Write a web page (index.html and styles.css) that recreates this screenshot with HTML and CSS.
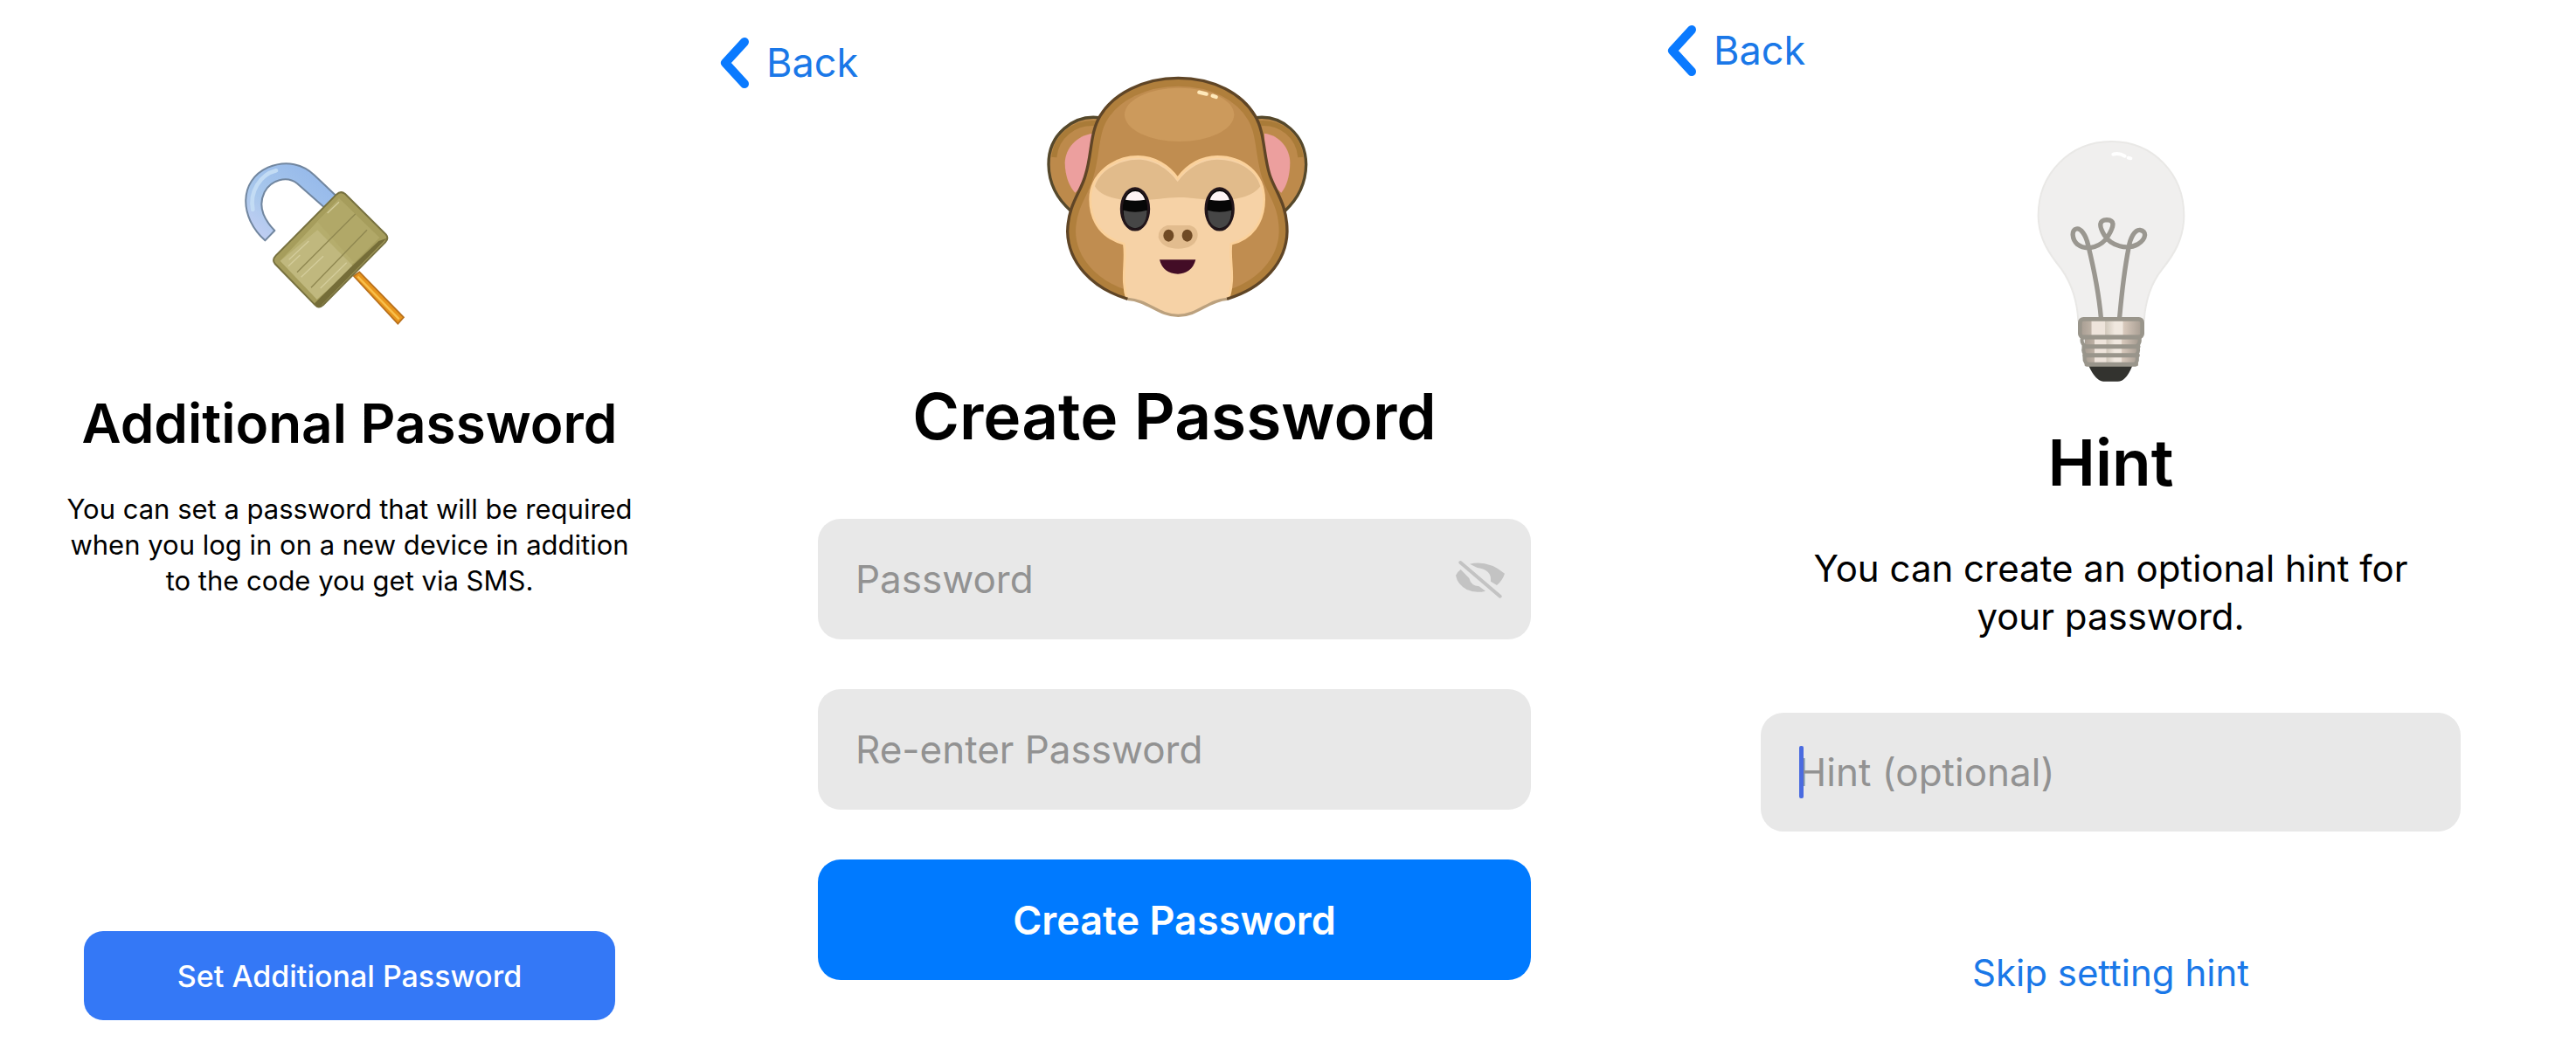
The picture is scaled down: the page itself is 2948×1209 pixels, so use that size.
FILE: index.html
```html
<!DOCTYPE html>
<html lang="en">
<head>
    <meta charset="UTF-8">
    <meta name="viewport" content="width=device-width, initial-scale=1.0">
    <title>Additional Password</title>
    <link rel="stylesheet" href="styles.css">
</head>
<body>
    <main class="screens">
        <!-- Step 1: intro -->
        <section class="screen intro">
            <svg class="art lock" viewBox="0 0 840 660" aria-hidden="true">
                <defs>
                    <linearGradient id="shackle" x1="0" y1="1" x2="1" y2="0">
                        <stop offset="0" stop-color="#c9d0f5"/>
                        <stop offset=".35" stop-color="#a9c8ec"/>
                        <stop offset="1" stop-color="#8fb4ea"/>
                    </linearGradient>
                </defs>
                <path d="M434 438L454 424L606 580L586 602Z" fill="#e8951c" stroke="#b8701c" stroke-width="5"/>
                <path d="M448 440L590 586" stroke="#f8c04c" stroke-width="7"/>
                <path d="M130 316C40 235 40 110 140 65C205 38 262 55 300 92L382 170L342 210L240 120C205 92 150 108 128 150C106 195 122 240 163 282Z" fill="url(#shackle)" stroke="#71869f" stroke-width="6" stroke-linejoin="round"/>
                <path d="M88 210C76 150 112 90 168 76" fill="none" stroke="#c3dcf4" stroke-width="14" stroke-linecap="round"/>
                <path d="M375 158Q390 144 405 156L545 295Q556 308 543 322L330 537Q314 552 300 536L164 396Q153 382 167 368Z" fill="#a69d5c" stroke="#77713f" stroke-width="6"/>
                <path d="M384 172L522 306L308 518L182 386Z" fill="#b5ad6d"/>
                <path d="M310 280L436 408L308 518L182 386Z" fill="#c0b87e"/>
                <path d="M384 172L310 252L436 392L522 306Z" fill="#b1a868"/>
                <path d="M548 308L318 544Q306 546 300 532L322 510L424 408L520 318Z" fill="#756d38"/>
                <path d="M240 425L440 225M288 478L480 280" stroke="#8f8750" stroke-width="4"/>
                <path d="M212 382L280 318M254 442L330 370M320 480L410 392M210 404L250 366M344 222L384 184" stroke="#d4cd9c" stroke-width="4"/>
            </svg>
            <h1 class="title">Additional Password</h1>
            <p class="text">You can set a password that will be required when you log in on a new device in addition to the code you get via SMS.</p>
            <button type="button" class="btn">Set Additional Password</button>
        </section>

        <!-- Step 2: password form -->
        <section class="screen create">
            <div class="hero">
                <a class="back" href="#">
                    <svg class="chevron" viewBox="0 0 33 58" aria-hidden="true"><path d="M28 5L6 29L28 53"/></svg>
                    Back
                </a>
                <svg class="art monkey" viewBox="-30 0 1050 930" aria-hidden="true">
                    <defs>
                        <clipPath id="head"><path d="M508 58C630 58 728 112 772 188C806 245 800 320 822 390C842 450 882 490 882 585C880 690 800 780 675 817C610 822 575 874 508 874C440 874 405 822 335 817C210 780 130 690 128 585C130 490 175 450 190 390C212 320 205 245 240 188C285 112 390 58 508 58Z"/></clipPath>
                    </defs>
                    <g fill="#bd8a4b" stroke="#55482b" stroke-width="10">
                        <path d="M236 194C150 184 62 250 63 355C64 430 100 480 140 515L215 420Z"/>
                        <path d="M776 194C862 184 946 250 947 355C946 430 912 480 874 515L800 420Z"/>
                    </g>
                    <path d="M82 330C88 260 150 205 232 214M928 330C922 260 862 205 784 214" fill="none" stroke="#a97b38" stroke-width="18"/>
                    <path d="M216 248C160 255 120 298 119 350C120 395 134 430 154 452L210 400Z" fill="#ec9f9e"/>
                    <path d="M804 248C856 255 892 298 892 350C891 395 880 430 862 452L806 400Z" fill="#ec9f9e"/>
                    <path d="M508 58C630 58 728 112 772 188C806 245 800 320 822 390C842 450 882 490 882 585C880 690 800 780 675 817C610 822 575 874 508 874C440 874 405 822 335 817C210 780 130 690 128 585C130 490 175 450 190 390C212 320 205 245 240 188C285 112 390 58 508 58Z" fill="#c08d50"/>
                    <g clip-path="url(#head)">
                        <path d="M508 58C630 58 728 112 772 188C806 245 800 320 822 390C842 450 882 490 882 585C880 690 800 780 675 817H335C210 780 130 690 128 585C130 490 175 450 190 390C212 320 205 245 240 188C285 112 390 58 508 58Z" fill="none" stroke="#b07f3c" stroke-width="56"/>
                        <ellipse cx="512" cy="184" rx="188" ry="92" fill="#cc9a5c"/>
                        <path d="M506 402C540 355 590 328 642 328C730 328 803 385 803 475C803 555 760 610 690 628C682 690 708 745 676 830L640 900H370L335 830C308 745 332 690 322 628C250 608 206 555 206 475C206 385 290 328 370 328C425 328 475 358 506 402Z" fill="#f6d2a6" stroke="#fbd19a" stroke-width="8"/>
                        <path d="M506 414C540 367 590 338 642 338C710 338 775 372 790 430C765 468 690 480 640 478C590 476 560 468 510 468C460 468 420 480 350 478C290 476 240 462 222 430C240 372 310 338 370 338C425 338 475 370 506 414Z" fill="#e1bb8b"/>
                    </g>
                    <path d="M335 817C210 780 130 690 128 585C130 490 175 450 190 390C212 320 205 245 240 188C285 112 390 58 508 58C630 58 728 112 772 188C806 245 800 320 822 390C842 450 882 490 882 585C880 690 800 780 675 817" fill="none" stroke="#5f4526" stroke-width="10"/>
                    <path d="M335 817C405 822 440 874 508 874C575 874 610 822 675 817" fill="none" stroke="#bba17e" stroke-width="10"/>
                    <path d="M580 107L605 113M626 119L638 123" stroke="#ffe9ba" stroke-width="13" stroke-linecap="round"/>
                    <g stroke="#22151a" stroke-width="9">
                        <ellipse cx="360" cy="508" rx="47" ry="71" fill="#070707"/>
                        <ellipse cx="650" cy="508" rx="47" ry="71" fill="#070707"/>
                    </g>
                    <path d="M320 512Q360 524 401 512Q399 570 360 574Q322 570 320 512ZM609 512Q650 524 691 512Q689 570 650 574Q611 570 609 512Z" fill="#464646"/>
                    <path d="M327 476C338 438 382 436 394 476Q360 482 327 476ZM617 476C628 438 672 436 684 476Q650 482 617 476Z" fill="#fff4f4"/>
                    <path d="M470 564H548Q580 574 574 606Q562 644 508 644Q454 644 440 606Q438 574 470 564Z" fill="#e2bc8e"/>
                    <ellipse cx="475" cy="599" rx="18" ry="21" fill="#704a24"/>
                    <ellipse cx="539" cy="599" rx="18" ry="21" fill="#704a24"/>
                    <path d="M444 682H568C560 715 535 731 507 731C475 731 452 715 444 682Z" fill="#430d26"/>
                </svg>
            </div>
            <h2 class="title title-lg">Create Password</h2>
            <form class="form">
                <div class="field">
                    <input type="password" placeholder="Password" aria-label="Password">
                    <button type="button" class="toggle" aria-label="Show password">
                        <svg viewBox="0 0 168 130" aria-hidden="true">
                            <path d="M48 13Q110 -1 168 46Q160 70 141 86L120 73Q124 32 74 26ZM17 32Q8 38 0 52Q5 82 38 101Q68 115 102 106L80 90Q52 88 46 62Z"/>
                            <path class="slash" d="M16 8L152 124"/>
                        </svg>
                    </button>
                </div>
                <div class="field">
                    <input type="password" placeholder="Re-enter Password" aria-label="Re-enter Password">
                </div>
                <button type="submit" class="btn btn-lg">Create Password</button>
            </form>
        </section>

        <!-- Step 3: hint -->
        <section class="screen hint">
            <div class="hero">
                <a class="back" href="#">
                    <svg class="chevron" viewBox="0 0 33 58" aria-hidden="true"><path d="M28 5L6 29L28 53"/></svg>
                    Back
                </a>
                <svg class="art bulb" viewBox="0 0 630 930" aria-hidden="true">
                    <defs>
                        <linearGradient id="metal">
                            <stop offset="0" stop-color="#a69c91"/>
                            <stop offset=".18" stop-color="#bdb1a5"/>
                            <stop offset=".19" stop-color="#eee4db"/>
                            <stop offset=".4" stop-color="#eee4db"/>
                            <stop offset=".41" stop-color="#d2c9bc"/>
                            <stop offset=".56" stop-color="#f0e8df"/>
                            <stop offset=".68" stop-color="#f0e8df"/>
                            <stop offset=".7" stop-color="#d8c9bc"/>
                            <stop offset="1" stop-color="#a69c91"/>
                        </linearGradient>
                    </defs>
                    <path d="M316 66C460 66 565 178 565 320C565 400 530 455 490 505C450 555 433 610 428 680H202C198 610 180 555 145 505C105 455 65 400 65 320C65 178 172 66 316 66Z" fill="#f0efee" stroke="#e9e8e6" stroke-width="6"/>
                    <path d="M322 110Q342 104 362 116M374 122L382 124" fill="none" stroke="#fff" stroke-width="12" stroke-linecap="round"/>
                    <!-- filament -->
                    <path d="M280 670C272 580 255 500 236 422C228 385 210 363 196 366C178 370 180 402 199 419C235 446 285 424 305 390C324 358 330 336 300 335C270 336 275 360 292 388C315 425 370 440 408 418C436 400 438 374 414 370C396 368 380 398 375 432C360 510 352 580 344 670" fill="none" stroke="#9a9790" stroke-width="16"/>
                    <path d="M238 836H388Q366 890 338 890H288Q260 886 238 836Z" fill="#33332f"/>
                    <rect x="224" y="738" width="184" height="98" fill="url(#metal)"/>
                    <rect x="208" y="676" width="214" height="62" rx="12" fill="url(#metal)" stroke="#99958b" stroke-width="14"/>
                    <path d="M216 738H412M222 770H408M224 800H406M232 832H398" stroke="#99958b" stroke-width="15" stroke-linecap="round"/>
                    <path d="M217 738Q210 755 224 768Q214 784 226 798Q218 818 234 832M411 738Q418 755 404 768Q414 784 402 798Q410 818 396 832" fill="none" stroke="#99958b" stroke-width="12"/>
                </svg>
            </div>
            <h2 class="title title-lg">Hint</h2>
            <p class="text text-lg">You can create an optional hint for your password.</p>
            <form class="form">
                <div class="field">
                    <input type="text" placeholder="Hint (optional)" aria-label="Hint (optional)">
                    <span class="caret"></span>
                </div>
                <a class="skip" href="#">Skip setting hint</a>
            </form>
        </section>
    </main>
</body>
</html>
```
FILE: styles.css
```css
* {
    margin: 0;
    padding: 0;
    box-sizing: border-box;
}
body {
    background: #fff;
    color: #000;
    font-family: Inter, "Liberation Sans", sans-serif;
}
.screens {
    display: grid;
    grid-template-columns: 800fr 1088fr 1060fr;
    min-height: 100vh;
}
.screen {
    display: flex;
    flex-direction: column;
    align-items: center;
}
.intro {
    padding: 170px 0 41px;
}
.create {
    padding-top: 43px;
}
.hint {
    padding: 29px 5px 0 0;
}

/* back link and picture share one grid cell */
.hero {
    display: grid;
    width: 100%;
}
.back,
.hero .art {
    grid-area: 1 / 1;
}
.back {
    display: flex;
    align-items: center;
    gap: 20px;
    justify-self: start;
    align-self: start;
    margin-left: 20px;
    color: #1a78e8;
    font-size: 45px;
    line-height: 58px;
    text-decoration: none;
}
.create .back {
    margin-left: 24px;
}
.chevron {
    width: 33px;
    height: 58px;
    fill: none;
    stroke: #0a7aff;
    stroke-width: 10;
    stroke-linecap: round;
    stroke-linejoin: round;
}
.art {
    display: block;
    justify-self: center;
}
.lock {
    width: 280px;
    height: 220px;
}
.monkey {
    width: 350px;
    height: 310px;
    margin-top: 27px;
}
.bulb {
    width: 210px;
    height: 310px;
    margin-top: 111px;
}

.title {
    margin-top: 55px;
    font-size: 62px;
    font-weight: 600;
    line-height: 80px;
    text-align: center;
}
.title-lg {
    margin-top: 52px;
    font-size: 73px;
    line-height: 90px;
}
.hint .title {
    margin-top: 35px;
}
.text {
    max-width: 665px;
    margin-top: 37px;
    font-size: 31px;
    line-height: 41px;
    text-align: center;
}
.text-lg {
    max-width: 730px;
    margin-top: 48px;
    font-size: 42px;
    line-height: 55px;
}

.btn {
    width: 76%;
    height: 102px;
    margin-top: auto;
    border: none;
    border-radius: 22px;
    background: #3478f6;
    color: #fff;
    font-family: inherit;
    font-size: 34px;
    font-weight: 500;
    cursor: pointer;
}
.btn-lg {
    width: 100%;
    height: 138px;
    margin-top: 0;
    border-radius: 26px;
    background: #007aff;
    font-size: 45px;
    font-weight: 600;
}

.form {
    display: flex;
    flex-direction: column;
    gap: 57px;
    width: 75%;
    margin-top: 72px;
}
.hint .form {
    width: 76%;
    gap: 134px;
    margin-top: 83px;
}
.field {
    position: relative;
    display: flex;
    align-items: center;
    height: 138px;
    padding: 0 30px 0 43px;
    border-radius: 26px;
    background: #e8e8e8;
}
.hint .field {
    height: 136px;
}
.field input {
    flex: 1;
    min-width: 0;
    border: none;
    outline: none;
    background: none;
    font-family: inherit;
    font-size: 44px;
}
.field input::placeholder {
    color: #929292;
    opacity: 1;
}
.toggle {
    width: 56px;
    height: 44px;
    border: none;
    background: none;
    cursor: pointer;
}
.toggle svg {
    display: block;
    width: 100%;
    height: 100%;
    fill: #c3c3c3;
}
.toggle .slash {
    stroke: #c3c3c3;
    stroke-width: 12;
    stroke-linecap: round;
}
.caret {
    position: absolute;
    left: 44px;
    top: 38px;
    width: 5px;
    height: 60px;
    border-radius: 2px;
    background: #4a6be0;
}
.skip {
    align-self: center;
    color: #1a78e8;
    font-size: 42px;
    line-height: 55px;
    text-decoration: none;
}
```
